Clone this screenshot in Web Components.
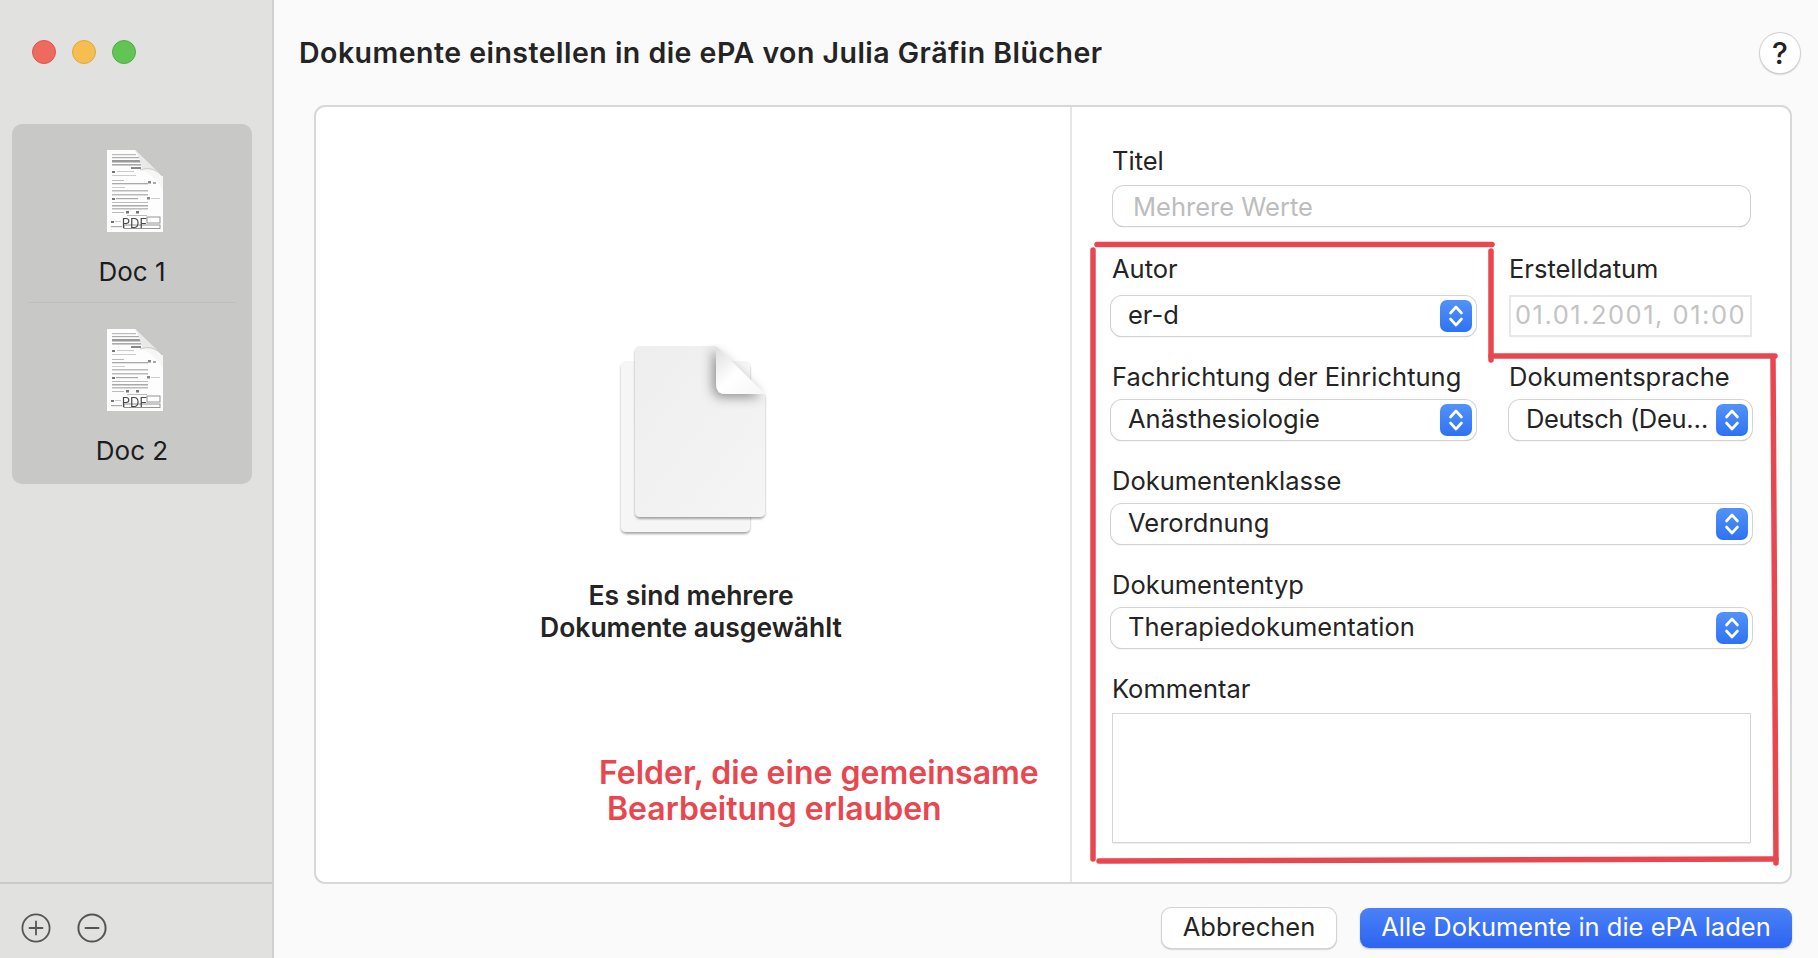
<!DOCTYPE html>
<html lang="de">
<head>
<meta charset="utf-8">
<title>Dokumente einstellen</title>
<style>
  html, body { margin: 0; padding: 0; background: #fafafa; }
  body { font-family: Inter, "Liberation Sans", sans-serif; color: #242424; overflow: hidden; }
</style>
</head>
<body>

<app-window>
  <side-bar slot="side">
    <doc-item>Doc 1</doc-item>
    <doc-item>Doc 2</doc-item>
  </side-bar>

  <title-bar slot="main">Dokumente einstellen in die ePA von Julia Gräfin Blücher</title-bar>

  <split-panel slot="main">
    <selection-info slot="left"></selection-info>
    <doc-form slot="right"></doc-form>
  </split-panel>

  <dialog-footer slot="main">
    <push-button>Abbrechen</push-button>
    <push-button primary>Alle Dokumente in die ePA laden</push-button>
  </dialog-footer>

  <annot-layer slot="overlay"></annot-layer>
</app-window>

<script>
// small helper so every element only has to hand over its markup
class ShadowEl extends HTMLElement {
    constructor() {
        super();
        this.attachShadow({ mode: 'open' });
    }
    connectedCallback() {
        this.shadowRoot.innerHTML = this.markup();
    }
}

class AppWindow extends ShadowEl {
    markup() {
        return `
            <style>
                :host { display: grid; grid-template-columns: 272px 1fr; width: 1818px; height: 958px; position: relative; overflow: hidden; }
                .main { display: flex; flex-direction: column; min-width: 0; padding-right: 26px; background: #fafafa; border-left: 2px solid #d0d0ce; }
            </style>
            <slot name="side"></slot>
            <div class="main"><slot name="main"></slot></div>
            <slot name="overlay"></slot>
        `;
    }
}

class SideBar extends ShadowEl {
    markup() {
        return `
            <style>
                :host { display: flex; flex-direction: column; background: #e1e1df; height: 958px; }
                .lights { display: flex; gap: 16px; padding: 40px 0 0 32px; height: 124px; box-sizing: border-box; flex: none; }
                .lights i { width: 24px; height: 24px; border-radius: 50%; box-sizing: border-box; display: block; }
                .r { background: #ee6a5f; border: 1px solid #d9574d; }
                .y { background: #f6be4f; border: 1px solid #dfa73d; }
                .g { background: #61c454; border: 1px solid #4fae43; }
                .list { margin: 0 20px 0 12px; height: 360px; background: #c8c8c7; border-radius: 10px; display: flex; flex-direction: column; flex: none; }
                .list ::slotted(doc-item:first-child) { height: 179px; border-bottom: 1px solid #bebebd; }
                .grow { flex: 1; }
                .tools { height: 76px; flex: none; border-top: 2px solid #c9c9c7; display: flex; gap: 26px; align-items: flex-start; padding: 29px 0 0 21px; box-sizing: border-box; }
            </style>
            <div class="lights"><i class="r"></i><i class="y"></i><i class="g"></i></div>
            <div class="list"><slot></slot></div>
            <div class="grow"></div>
            <div class="tools">
                <svg width="30" height="30" viewBox="0 0 30 30" fill="none" stroke="#555553" stroke-width="1.8" stroke-linecap="round">
                    <circle cx="15" cy="15" r="13.6"/><path d="M15 8.500v13M8.500 15h13"/>
                </svg>
                <svg width="30" height="30" viewBox="0 0 30 30" fill="none" stroke="#555553" stroke-width="2" stroke-linecap="round">
                    <circle cx="15" cy="15" r="13.600"/><path d="M8.500 15h13"/>
                </svg>
            </div>
        `;
    }
}

class DocItem extends ShadowEl {
    markup() {
        return `
            <style>
                :host { display: flex; flex-direction: column; align-items: center; box-sizing: border-box; padding-top: 26px; margin: 0 16px; height: 180px; }
                .name { font-size: 26px; line-height: 30px; color: #1c1c1c; margin-top: 23px; }
            </style>
            <pdf-thumb></pdf-thumb>
            <div class="name"><slot></slot></div>
        `;
    }
}

class PdfThumb extends ShadowEl {
    markup() {
        // [x, y, width, colour, height] of the tiny form lines on the page preview
        const lines = [
            [6, 4, 24, '#bbb', 1.2], [6, 7, 27, '#aaa', 1.2], [6, 10, 30, '#999', 2.5], [6, 14, 32, '#aaa', 1.6],
            [25, 17, 10, '#888', 2], [6, 21, 3, '#777', 2], [11, 21, 17, '#ccc', 1], [6, 25, 24, '#ccc', 1],
            [6, 30, 12, '#bbb', 1], [6, 33, 36, '#aaa', 1.3], [42, 31, 3, '#888', 2.5], [47, 32, 3, '#aaa', 2],
            [6, 37, 13, '#ccc', 1], [6, 40, 36, '#bbb', 1.5], [6, 44, 36, '#bbb', 1.5], [6, 48, 3, '#777', 2],
            [10, 48, 22, '#aaa', 1.2], [41, 47, 3, '#888', 2.5], [45, 48, 9, '#ccc', 1], [6, 52, 36, '#bbb', 1],
            [6, 55, 36, '#aaa', 1.5], [6, 58, 36, '#bbb', 1.5], [6, 62, 12, '#bbb', 1], [20, 61, 3, '#777', 2.5],
            [30, 61, 3, '#777', 2.5], [21, 65, 20, '#bbb', 1], [5, 71, 3, '#777', 2], [9, 71, 6, '#ccc', 1],
            [5, 76, 11, '#aaa', 1.2]
        ];
        const rows = lines.map(l => `<rect x="${l[0]}" y="${l[1]}" width="${l[2]}" height="${l[4]}" fill="${l[3]}"/>`).join('');
        return `
            <style>
                :host { display: block; width: 58px; height: 84px; margin-left: 5px; }
                svg { display: block; filter: blur(.6px); }
                text { font-family: Inter, "Liberation Sans", sans-serif; font-size: 13px; fill: #4a4a4a; }
            </style>
            <svg width="58" height="84" viewBox="0 0 58 84">
                <path d="M1 0H29L57 27V82H1Z" fill="#fdfdfd"/>
                ${rows}
                <path d="M29 0L57 27C52 21 43 19 36 20 35 13 33 6 29 0Z" fill="#e9e9e9"/>
                <path d="M34 20C43 17 52 21 57 27V40C52 30 44 23 34 20Z" fill="#f6f6f6"/>
                <path d="M34 20C43 17 50 19 56 26" fill="none" stroke="#c4c4c4" stroke-width=".9"/>
                <rect x="41" y="67" width="13" height="6" fill="none" stroke="#888" stroke-width=".9"/>
                <rect x="18" y="75" width="36" height="3.500" fill="none" stroke="#888" stroke-width=".9"/>
                <text x="28.500" y="78" text-anchor="middle">PDF</text>
            </svg>
        `;
    }
}

class TitleBar extends ShadowEl {
    markup() {
        return `
            <style>
                :host { display: flex; align-items: center; justify-content: space-between; height: 105px; padding: 0 0 0 25px; box-sizing: border-box; flex: none; margin-right: -8px; }
                .t { font-size: 28.5px; letter-spacing: .48px; font-weight: 600; color: #242424; margin-top: -1px; white-space: nowrap; }
                .help { width: 40px; height: 40px; border-radius: 50%; background: #fff; box-shadow: 0 0 0 1px #d2d2d2, 0 1px 2px rgba(0,0,0,.4); display: flex; align-items: center; justify-content: center; font-size: 30px; font-weight: 500; color: #222; }
            </style>
            <div class="t"><slot></slot></div>
            <div class="help">?</div>
        `;
    }
}

class SplitPanel extends ShadowEl {
    markup() {
        return `
            <style>
                :host { display: grid; grid-template-columns: 756px 1fr; height: 779px; margin-left: 40px; box-sizing: border-box; flex: none; background: #fff; border: 2px solid #d8d8d8; border-radius: 11px; overflow: hidden; }
                .l { display: flex; border-right: 2px solid #e6e6e6; }
                .r { display: flex; }
            </style>
            <div class="l"><slot name="left"></slot></div>
            <div class="r"><slot name="right"></slot></div>
        `;
    }
}

class SelectionInfo extends ShadowEl {
    markup() {
        return `
            <style>
                :host { display: flex; flex: 1; flex-direction: column; align-items: center; justify-content: center; padding: 0 4px 2px 0; }
                svg { display: block; margin: 0 0 41px 3px; }
                .msg { font-size: 26.5px; font-weight: 600; line-height: 32px; text-align: center; color: #242424; }
            </style>
            <svg width="152" height="194" viewBox="0 0 152 194">
                <defs>
                    <linearGradient id="pg" x1="0" y1="0" x2="1" y2="1">
                        <stop offset="0" stop-color="#eeeeee"/><stop offset="1" stop-color="#f5f5f5"/>
                    </linearGradient>
                    <linearGradient id="fold" x1="0" y1="0" x2="1" y2="1">
                        <stop offset="0" stop-color="#dcdcdc"/><stop offset=".5" stop-color="#fff"/><stop offset="1" stop-color="#f6f6f6"/>
                    </linearGradient>
                    <filter id="sh" x="-10%" y="-10%" width="120%" height="120%">
                        <feDropShadow dx="0" dy="2" stdDeviation="1.3" flood-color="#000" flood-opacity=".34"/>
                    </filter>
                    <filter id="fs" x="-40%" y="-40%" width="180%" height="180%">
                        <feDropShadow dx="-3" dy="3" stdDeviation="6" flood-color="#000" flood-opacity=".42"/>
                    </filter>
                </defs>
                <rect x="4" y="17" width="129" height="171" rx="5" fill="#f6f6f6" filter="url(#sh)"/>
                <path d="M23 2H97Q99 2 101 4L146 48Q148 50 148 54V167Q148 173 142 173H24Q18 173 18 167V7Q18 2 23 2Z" fill="url(#pg)" filter="url(#sh)"/>
                <path d="M97 2Q99 2 101 4L146 48Q148 50 146 50H109Q99 50 99 40V6Z" fill="url(#fold)" filter="url(#fs)"/>
            </svg>
            <div class="msg">Es sind mehrere<br>Dokumente ausgewählt</div>
        `;
    }
}

class DocForm extends ShadowEl {
    markup() {
        return `
            <style>
                :host { display: grid; flex: 1; grid-template-columns: 365px 243px; column-gap: 33px; row-gap: 29px; align-content: start; padding: 40px 0 0 39px; }
                .wide { grid-column: 1 / -1; }
            </style>
            <form-field class="wide" label="Titel" gap="11">
                <text-box placeholder="Mehrere Werte"></text-box>
            </form-field>
            <form-field label="Autor" gap="13"><select-box>er-d</select-box></form-field>
            <form-field label="Erstelldatum" gap="13" nudge="1"><date-box>01.01.2001, 01:00</date-box></form-field>
            <form-field label="Fachrichtung der Einrichtung" gap="9" lift="2"><select-box>Anästhesiologie</select-box></form-field>
            <form-field label="Dokumentsprache" gap="9" lift="2" nudge="1"><select-box><span style="letter-spacing:-.35px">Deutsch (Deu…</span></select-box></form-field>
            <form-field class="wide" label="Dokumentenklasse" gap="9" lift="2"><select-box>Verordnung</select-box></form-field>
            <form-field class="wide" label="Dokumententyp" gap="9" lift="2"><select-box>Therapiedokumentation</select-box></form-field>
            <form-field class="wide" label="Kommentar" gap="11" lift="2"><memo-box></memo-box></form-field>
        `;
    }
}

class FormField extends ShadowEl {
    markup() {
        const lift = this.getAttribute('lift') || 0;
        return `
            <style>
                :host { display: flex; flex-direction: column; min-width: 0; }
                .lab { font-size: 25.5px; line-height: 28px; height: 28px; color: #242424; margin-top: -${lift}px; padding-left: ${this.getAttribute('nudge') ? 0 : 1}px; margin-bottom: ${this.getAttribute('gap')}px; white-space: nowrap; }
            </style>
            <div class="lab">${this.getAttribute('label')}</div>
            <slot></slot>
        `;
    }
}

class TextBox extends ShadowEl {
    markup() {
        return `
            <style>
                :host { display: flex; align-items: center; height: 40px; margin: 0 2px; padding-left: 20px; box-sizing: border-box; background: #fff; border-radius: 11px; box-shadow: 0 0 0 1px #d2d2d2, 0 1px 1px 0 #8f8f8f; font-size: 25.5px; color: #bdbdbd; }
            </style>
            ${this.getAttribute('placeholder')}
        `;
    }
}

class SelectBox extends ShadowEl {
    markup() {
        return `
            <style>
                :host { display: flex; align-items: center; justify-content: space-between; height: 40px; padding: 0 4px 0 17px; box-sizing: border-box; background: #fff; border-radius: 11px; box-shadow: 0 0 0 1px #d4d4d4, 0 1px 1px 0 #969696; font-size: 25.5px; color: #242424; white-space: nowrap; }
                .txt { margin-bottom: 4px; }
                .btn { flex: none; width: 32px; height: 32px; border-radius: 7px; background: linear-gradient(#5292f8, #2f72f2); display: flex; align-items: center; justify-content: center; }
            </style>
            <span class="txt"><slot></slot></span>
            <span class="btn">
                <svg width="18" height="26" viewBox="0 0 18 26" fill="none" stroke="#fff" stroke-width="2.6" stroke-linecap="round" stroke-linejoin="round">
                    <path d="M3.500 10l5.500-6 5.500 6M3.500 16l5.500 6 5.500-6"/>
                </svg>
            </span>
        `;
    }
}

class DateBox extends ShadowEl {
    markup() {
        return `
            <style>
                :host { display: flex; align-items: center; height: 38px; margin: 1px 2px 0 2px; padding: 0 0 4px 4px; box-sizing: border-box; background: #fff; box-shadow: 0 0 0 2px #e8e8e8, 0 2px 1px 0 #d4d4d4; font-size: 25.5px; color: #c4c4c4; white-space: nowrap; letter-spacing: 1.5px; }
            </style>
            <slot></slot>
        `;
    }
}

class MemoBox extends ShadowEl {
    markup() {
        return `
            <style>
                :host { display: block; height: 128px; margin: 0 2px; background: #fff; box-shadow: 0 0 0 1px #d6d6d6, 0 1px 1px 0 #8f8f8f; }
            </style>
        `;
    }
}

class DialogFooter extends ShadowEl {
    markup() {
        return `
            <style>
                :host { display: flex; justify-content: flex-end; gap: 24px; padding-top: 24px; }
            </style>
            <slot></slot>
        `;
    }
}

class PushButton extends ShadowEl {
    markup() {
        const primary = this.hasAttribute('primary');
        return `
            <style>
                :host { display: flex; align-items: center; justify-content: center; height: 40px; padding-bottom: 4px; box-sizing: border-box; border-radius: 9px; font-size: 25.5px; white-space: nowrap;
                    ${primary
                        ? 'width: 432px; color: #fff; background: linear-gradient(#4a81f7, #2d64f1); box-shadow: 0 1px 2px rgba(0,0,0,.25);'
                        : 'width: 174px; color: #242424; background: #fff; box-shadow: 0 0 0 1px #d4d4d4, 0 1px 2px rgba(0,0,0,.45);'}
                }
            </style>
            <slot></slot>
        `;
    }
}

// hand-drawn red markup that sits on top of the dialog
class AnnotLayer extends ShadowEl {
    markup() {
        return `
            <style>
                :host { position: absolute; inset: 0; pointer-events: none; }
                svg { position: absolute; left: 0; top: 0; }
                .note { position: absolute; font-size: 32px; font-weight: 600; line-height: 36px; color: #e8474f; white-space: nowrap; }
            </style>
            <svg width="1818" height="958" viewBox="0 0 1818 958" fill="none" stroke="#e8474f" stroke-width="5.500" stroke-linecap="round">
                <path d="M1097 244.500H1492"/>
                <path d="M1093 250V859"/>
                <path d="M1491 251V360"/>
                <path d="M1491 356H1775"/>
                <path d="M1773 358L1776 863"/>
                <path d="M1099 861L1776 859"/>
            </svg>
            <div class="note" style="left:599px;top:755px">Felder, die eine gemeinsame</div>
            <div class="note" style="left:607px;top:791px">Bearbeitung erlauben</div>
        `;
    }
}

customElements.define('app-window', AppWindow);
customElements.define('side-bar', SideBar);
customElements.define('doc-item', DocItem);
customElements.define('pdf-thumb', PdfThumb);
customElements.define('title-bar', TitleBar);
customElements.define('split-panel', SplitPanel);
customElements.define('selection-info', SelectionInfo);
customElements.define('doc-form', DocForm);
customElements.define('form-field', FormField);
customElements.define('text-box', TextBox);
customElements.define('select-box', SelectBox);
customElements.define('date-box', DateBox);
customElements.define('memo-box', MemoBox);
customElements.define('dialog-footer', DialogFooter);
customElements.define('push-button', PushButton);
customElements.define('annot-layer', AnnotLayer);
</script>
</body>
</html>
